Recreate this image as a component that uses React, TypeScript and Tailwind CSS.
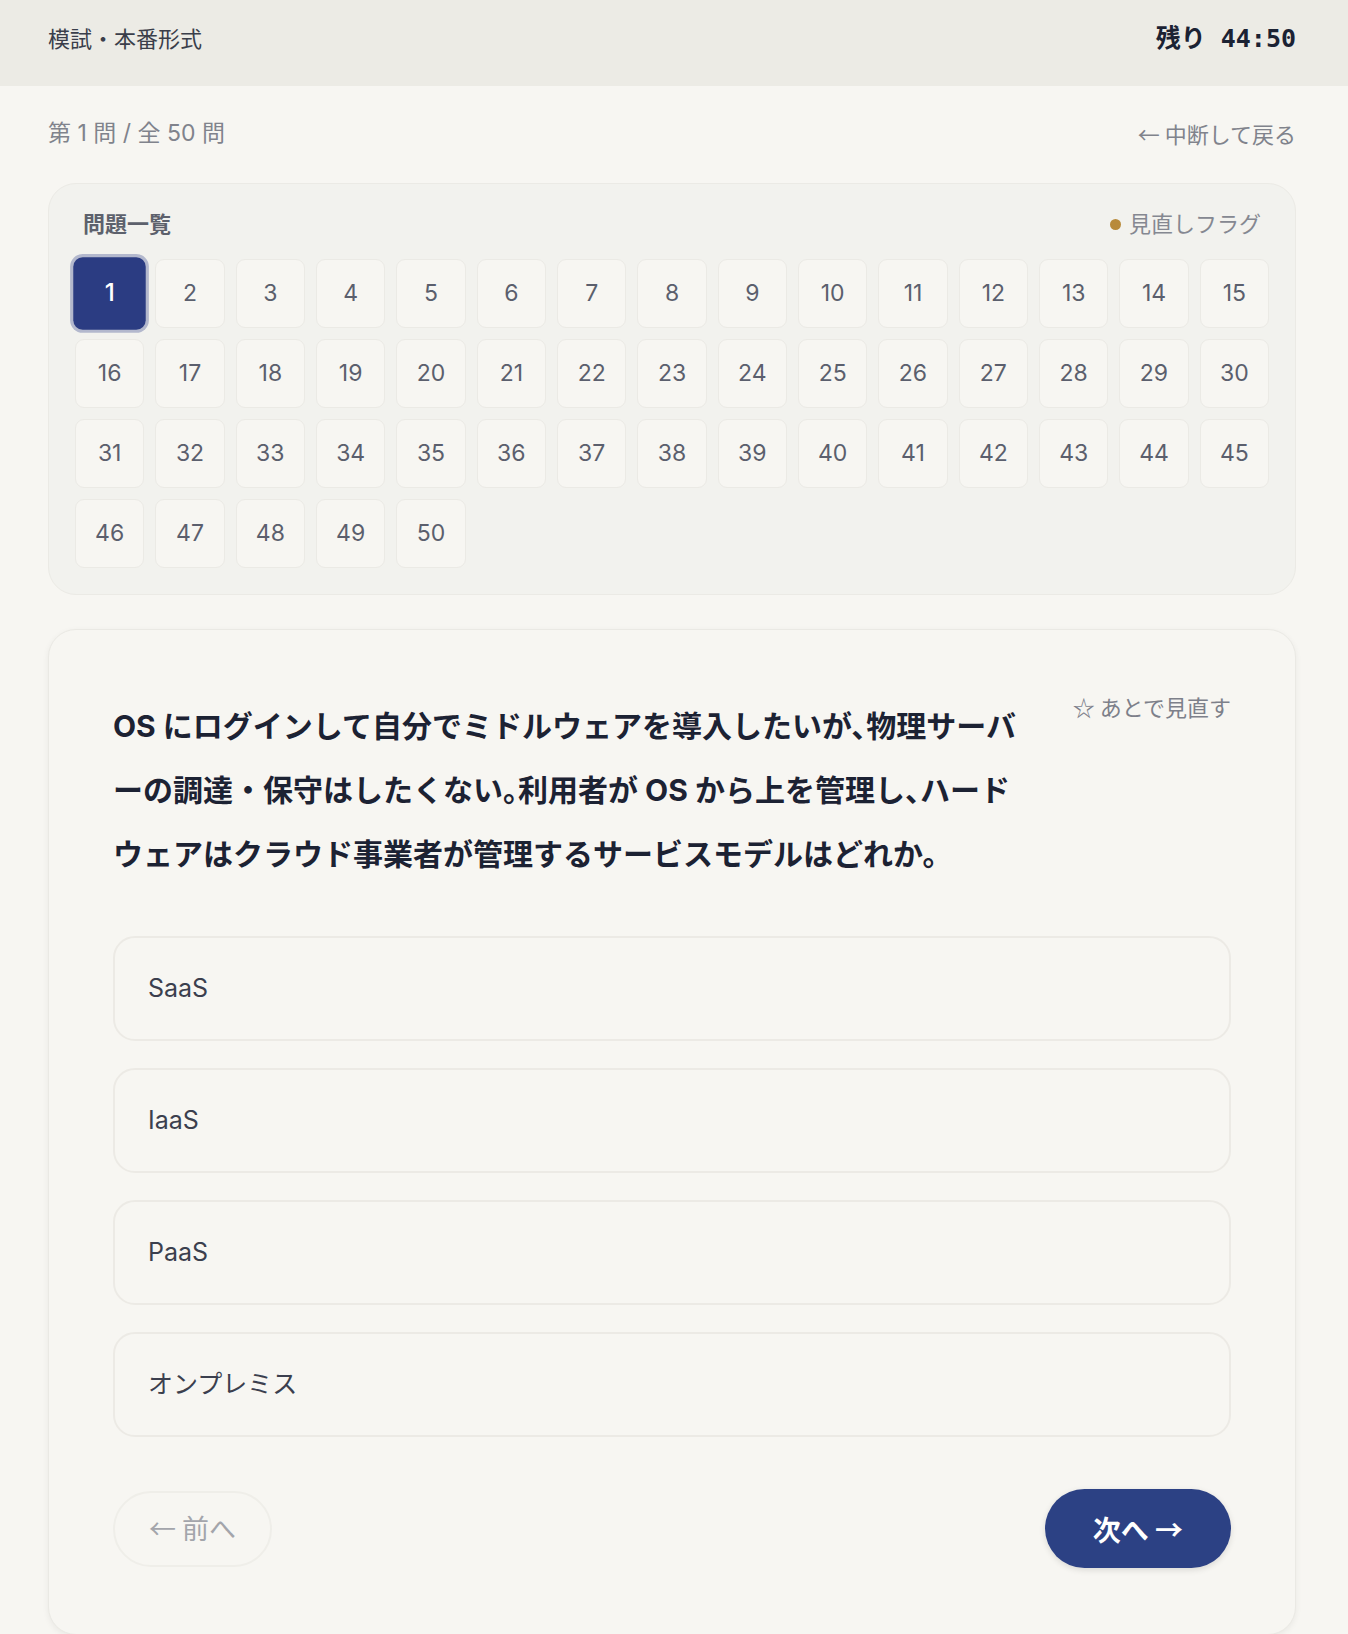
import React, { useState } from 'react';

const options = ['SaaS', 'IaaS', 'PaaS', 'オンプレミス'];

const cjk = { fontFamily: '"Noto Sans CJK JP", sans-serif' };

export default function App() {
    const [current, setCurrent] = useState(1);
    const [selected, setSelected] = useState<number | null>(null);
    const [flagged, setFlagged] = useState(false);

    return (
        <div
            className="min-h-screen bg-[#f7f6f2] text-[#3a3e4a]"
            style={{ fontFamily: 'Inter, "Noto Sans CJK JP", sans-serif' }}
        >
            <header className="h-[86px] bg-[#ecebe5] pl-12 pr-[52px] flex items-center justify-between pb-2">
                <div className="text-[22px] text-[#3a3e4a] -mt-1" style={cjk}>
                    模試・本番形式
                </div>
                <div
                    className="text-[25px] font-bold text-[#1b2233]"
                    style={{ fontFamily: '"DejaVu Sans Mono", "Noto Sans CJK JP", monospace' }}
                >
                    残り 44:50
                </div>
            </header>

            <main className="pl-12 pr-[52px] pt-[31px]">
                <div className="h-8 flex items-center justify-between text-[23px] text-[#80838c] mb-[34px]">
                    <div>第 1 問 / 全 50 問</div>
                    <button className="cursor-pointer text-[22px]" style={cjk}>
                        ← 中断して戻る
                    </button>
                </div>

                <section className="rounded-[28px] bg-[#f2f2ee] border border-[#ebeae5] px-[26px] pt-6 pb-[26px]">
                    <div className="h-8 px-2 flex items-center justify-between mb-[19px]">
                        <div className="text-[22px] font-bold text-[#5d616c]">問題一覧</div>
                        <div className="flex items-center gap-2 text-[22px] text-[#858891]">
                            <span className="w-[11px] h-[11px] rounded-full bg-[#b88a3a]" />
                            見直しフラグ
                        </div>
                    </div>
                    <div className="grid grid-cols-15 gap-[11px]">
                        {Array.from({ length: 50 }, (_, i) => i + 1).map((n) => (
                            <button
                                key={n}
                                onClick={() => setCurrent(n)}
                                className={`h-[69px] flex items-center justify-center rounded-[9px] text-[23px] cursor-pointer ${
                                    n === current
                                        ? 'bg-[#2b3c82] text-white font-medium scale-105 ring-[3px] ring-[#b3b8cd]'
                                        : 'bg-[#f7f6f2] text-[#5b5f6d] border border-[#ebeae5]'
                                }`}
                            >
                                {n}
                            </button>
                        ))}
                    </div>
                </section>

                <section className="mt-[34px] rounded-[28px] bg-[#f7f6f2] border border-[#eae9e4] shadow-[0_2px_6px_rgba(0,0,0,0.06)] px-16 pt-16 pb-[66px]">
                    <div className="flex items-start justify-between">
                        <p
                            className="w-[940px] text-[30px] leading-[64px] font-bold text-[#1c2233]"
                            style={{ fontFeatureSettings: '"halt"' }}
                        >
                            OS にログインして自分でミドルウェアを導入したいが、物理サーバ
                            <br />
                            ーの調達<span style={{ fontFeatureSettings: 'normal' }}>・</span>保守はしたくない。利用者が OS から上を管理し、ハード
                            <br />
                            ウェアはクラウド事業者が管理するサービスモデルはどれか。
                        </p>
                        <button
                            onClick={() => setFlagged(!flagged)}
                            className={`h-8 -mt-1 text-[22px] leading-8 cursor-pointer whitespace-nowrap ${
                                flagged ? 'text-[#b88a3a]' : 'text-[#7d808a]'
                            }`}
                            style={cjk}
                        >
                            {flagged ? '★' : '☆'} あとで見直す
                        </button>
                    </div>

                    <div className="mt-[50px] flex flex-col gap-[27px]">
                        {options.map((o, i) => (
                            <button
                                key={o}
                                onClick={() => setSelected(i)}
                                className={`h-[105px] w-full text-left px-[33px] rounded-[22px] border-2 text-[25px] cursor-pointer ${
                                    selected === i
                                        ? 'border-[#2b3c82] bg-[#eef0f7] text-[#1c2233]'
                                        : 'border-[#eceae5] bg-[#f7f6f2] text-[#3b3f4e]'
                                }`}
                            >
                                {o}
                            </button>
                        ))}
                    </div>

                    <div className="mt-[52px] flex items-center justify-between">
                        <button
                            disabled
                            className="h-[76px] px-[34px] rounded-full border-2 border-[#efeee9] text-[27px] text-[#a3a5ab]"
                            style={cjk}
                        >
                            ← 前へ
                        </button>
                        <button
                            onClick={() => setCurrent(Math.min(50, current + 1))}
                            className="h-[79px] px-12 rounded-full bg-[#2c4184] text-white text-[28px] font-bold shadow-[0_2px_6px_rgba(0,0,0,0.12)] cursor-pointer"
                            style={cjk}
                        >
                            次へ →
                        </button>
                    </div>
                </section>
            </main>
        </div>
    );
}
